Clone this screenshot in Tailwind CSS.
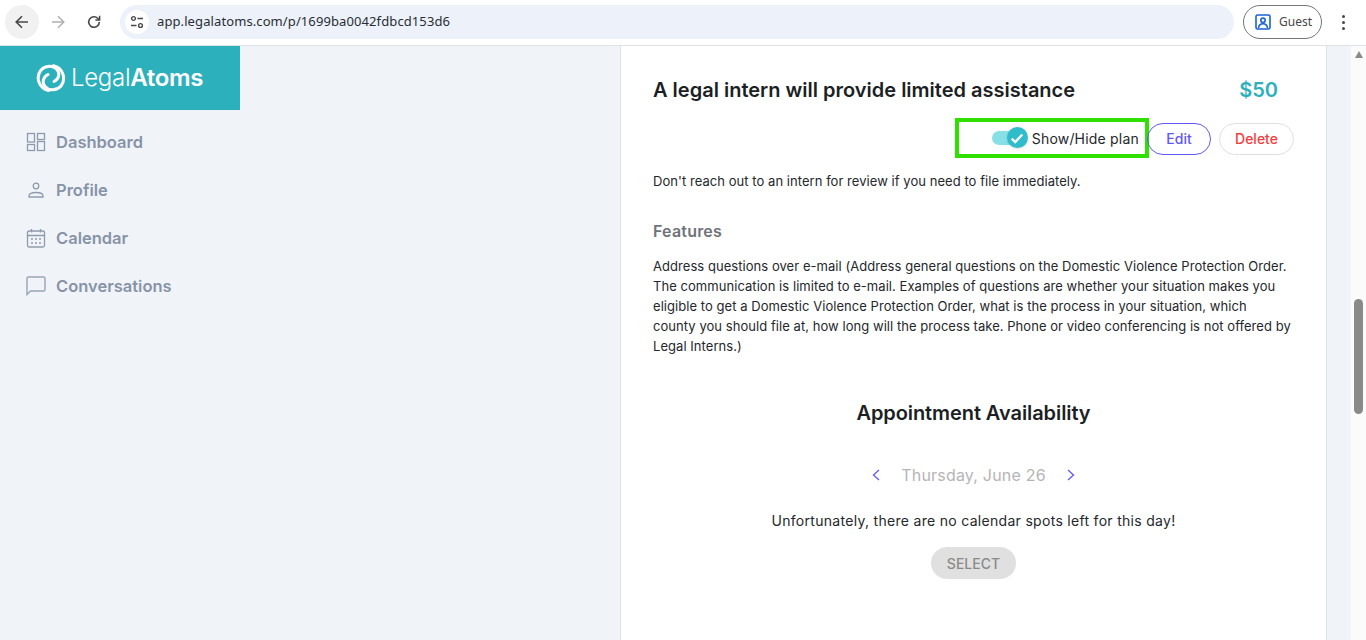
<!DOCTYPE html>
<html lang="en">
<head>
    <meta charset="UTF-8">
    <title>LegalAtoms</title>
    <script src="https://cdn.jsdelivr.net/npm/@tailwindcss/browser@4"></script>
</head>
<body class="h-[640px] w-[1366px] overflow-hidden bg-[#f0f4f9] font-['Inter',sans-serif]">
    <!-- browser toolbar -->
    <div class="flex h-[46px] items-center border-b border-[#dfe1e5] bg-white pb-px font-['Noto_Sans',sans-serif]">
        <div class="ml-[5px] flex h-[34px] w-[34px] items-center justify-center rounded-full bg-[#f1f1f1]">
            <svg width="16" height="16" viewBox="0 0 16 16" fill="none" stroke="#474747" stroke-width="1.6"><path d="M14 8H2.500M8 2.200 2.200 8 8 13.800"/></svg>
        </div>
        <div class="ml-[2px] flex h-[34px] w-[34px] items-center justify-center">
            <svg width="16" height="16" viewBox="0 0 16 16" fill="none" stroke="#b0b0b0" stroke-width="1.5"><path d="M2 8h11.500M8 2.200 13.800 8 8 13.800"/></svg>
        </div>
        <div class="ml-[2px] flex h-[34px] w-[34px] items-center justify-center">
            <svg width="16" height="16" viewBox="0 0 16 16" fill="none" stroke="#474747" stroke-width="1.6"><path d="M13.300 8a5.300 5.300 0 1 1-1.600-3.800L13.500 6"/><path d="M13.600 1.800V6H9.400" stroke-width="1.5"/></svg>
        </div>
        <div class="ml-[9px] flex h-[34px] w-[1114px] items-center rounded-full bg-[#ecf1fa]">
            <div class="ml-[5px] flex h-6 w-6 items-center justify-center rounded-full bg-white">
                <svg width="14" height="14" viewBox="0 0 14 14" fill="none" stroke="#474747" stroke-width="1.4"><circle cx="3.500" cy="3.500" r="1.900"/><path d="M7.500 3.500H13M1 10.500h5.500"/><circle cx="10.500" cy="10.500" r="1.900"/></svg>
            </div>
            <span class="ml-[8px] text-[13px] tracking-[0.1px] text-[#2a2e33]">app.legalatoms.com/p/1699ba0042fdbcd153d6</span>
        </div>
        <div class="ml-[9px] flex h-[34px] w-[79px] items-center rounded-full border border-[#747775]">
            <svg class="ml-[11px]" width="16" height="16" viewBox="0 0 16 16" fill="none" stroke="#1a62d6" stroke-width="1.6"><rect x="1" y="1" width="14" height="14" rx="1.500"/><circle cx="8" cy="6.300" r="2.200"/><path d="M3.500 14c.3-3 2-4.300 4.500-4.300s4.200 1.300 4.500 4.300"/></svg>
            <span class="ml-[8px] text-xs text-[#474747]">Guest</span>
        </div>
        <div class="ml-[20px] flex flex-col gap-[3px]">
            <div class="h-[3px] w-[3px] rounded-full bg-[#474747]"></div>
            <div class="h-[3px] w-[3px] rounded-full bg-[#474747]"></div>
            <div class="h-[3px] w-[3px] rounded-full bg-[#474747]"></div>
        </div>
    </div>

    <div class="flex h-[594px]">
        <!-- sidebar -->
        <aside class="w-[240px] shrink-0">
            <div class="flex h-[64px] items-center bg-[#2cb0bc] pl-[36px] text-white">
                <svg width="30" height="30" viewBox="0 0 30 30" fill="none" stroke="white" stroke-width="3" stroke-linecap="round"><path d="M12.500 27.500A12.800 12.800 0 0 1 5 7C9 2.500 17 1.500 21 6.500c3.500 4.500 1.500 10-3 12"/><path d="M17.500 2.800A12.800 12.800 0 0 1 25 23C21 27.500 13 28.500 9 23.500c-3.500-4.500-1.500-10 3-12"/></svg>
                <span class="ml-[5px] text-[24px] font-light tracking-[-0.3px]">Legal<span class="font-semibold">Atoms</span></span>
            </div>
            <nav class="mt-[8px] text-[#8793a6]">
                <a class="flex h-[48px] items-center pl-[26px] text-[16.5px] font-semibold">
                    <svg class="w-[20px]" width="20" height="20" viewBox="0 0 20 20" fill="none" stroke="#8f9bad" stroke-width="1.3"><rect x="1.500" y="1.500" width="7" height="8.500"/><rect x="11.500" y="1.500" width="7" height="6"/><rect x="1.500" y="12.500" width="7" height="6"/><rect x="11.500" y="9.500" width="7" height="9"/></svg>
                    <span class="ml-[10px]">Dashboard</span>
                </a>
                <a class="flex h-[48px] items-center pl-[26px] text-[16.5px] font-semibold">
                    <svg class="w-[20px]" width="20" height="20" viewBox="0 0 20 20" fill="none" stroke="#8f9bad" stroke-width="1.3"><circle cx="10" cy="6" r="2.800"/><path d="M3 17v-1c0-2.200 2.500-3.500 7-3.500s7 1.300 7 3.500v1z"/></svg>
                    <span class="ml-[10px]">Profile</span>
                </a>
                <a class="flex h-[48px] items-center pl-[26px] text-[16.5px] font-semibold">
                    <svg class="w-[20px]" width="20" height="20" viewBox="0 0 20 20" fill="none" stroke="#8f9bad" stroke-width="1.3"><rect x="1.500" y="3" width="17" height="16" rx="1.500"/><path d="M1.500 7.500h17M5.500 1v3.500M14.500 1v3.500"/><path d="M5 11h2M9 11h2M13 11h2M5 15h2M9 15h2M13 15h2" stroke-width="1.600"/></svg>
                    <span class="ml-[10px]">Calendar</span>
                </a>
                <a class="flex h-[48px] items-center pl-[26px] text-[16.5px] font-semibold">
                    <svg class="w-[20px]" width="20" height="20" viewBox="0 0 20 20" fill="none" stroke="#9aa4b4" stroke-width="1.400"><path d="M1 18.500V2.500A1.500 1.500 0 0 1 2.500 1h15A1.500 1.500 0 0 1 19 2.500v11a1.500 1.500 0 0 1-1.500 1.500H4.500z"/></svg>
                    <span class="ml-[10px]">Conversations</span>
                </a>
            </nav>
        </aside>

        <div class="w-[380px] shrink-0"></div>

        <!-- plan card -->
        <main class="h-full w-[707px] shrink-0 border-x border-[#dfe2e7] bg-white pl-[32px] pr-[32px]">
            <div class="flex h-[58px] items-end justify-between pr-[16px]">
                <h1 class="text-[20px] leading-[28px] font-semibold text-[#1c1f24]">A legal intern will provide limited assistance</h1>
                <span class="text-[20px] leading-[28px] font-semibold text-[#2cb0bc]">$50</span>
            </div>
            <div class="mt-[14px] flex items-center justify-end">
                <div class="flex h-[40px] w-[194px] items-center justify-end border-[4px] border-[#2fe000] pr-[6px]">
                    <div class="relative h-[14px] w-[36px]">
                        <div class="h-[14px] w-[30px] rounded-full bg-[#87e0e6]"></div>
                        <div class="absolute top-[-4px] right-0 flex h-[21px] w-[21px] items-center justify-center rounded-full bg-[#2fbccb] shadow">
                            <svg width="14" height="14" viewBox="0 0 12 12" fill="none" stroke="white" stroke-width="2"><path d="M1.500 6.500 4.500 9.500 10.500 3"/></svg>
                        </div>
                    </div>
                    <span class="ml-[4px] text-[14px] tracking-[0.2px] text-[#24272c]">Show/Hide plan</span>
                </div>
                <button class="mt-[1px] ml-[-2px] h-[32px] w-[64px] rounded-full border border-[#6058f6] text-[14px] font-medium text-[#6058f6]">Edit</button>
                <button class="mt-[1px] ml-[8px] h-[32px] w-[75px] rounded-full border border-[#e0e0e0] text-[14px] font-medium text-[#f53d3d]">Delete</button>
            </div>
            <p class="mt-[13px] text-[13px] leading-[20px] tracking-[0.05px] text-[#24272c]">Don't reach out to an intern for review if you need to file immediately.</p>
            <h2 class="mt-[28px] text-[16px] leading-[24px] font-semibold tracking-[0.2px] text-[#6f737a]">Features</h2>
            <p class="mt-[13px] w-[640px] text-[13px] leading-[20px] tracking-[0.05px] text-[#24272c]">Address questions over e-mail (Address general questions on the Domestic Violence Protection Order. The communication is limited to e-mail. Examples of questions are whether your situation makes you eligible to get a Domestic Violence Protection Order, what is the process in your situation, which county you should file at, how long will the process take. Phone or video conferencing is not offered by Legal Interns.)</p>
            <div class="flex flex-col items-center">
                <h2 class="mt-[43px] text-[20px] leading-[28px] font-semibold tracking-[-0.08px] text-[#1c1f24]">Appointment Availability</h2>
                <div class="mt-[34px] flex h-[28px] items-center">
                    <svg width="8" height="12" viewBox="0 0 8 12" fill="none" stroke="#6058f6" stroke-width="1.300"><path d="M7 1 1.500 6 7 11"/></svg>
                    <span class="mx-[21px] text-[16px] tracking-[0.2px] text-[#b5b5b5]">Thursday, June 26</span>
                    <svg width="8" height="12" viewBox="0 0 8 12" fill="none" stroke="#6058f6" stroke-width="1.300"><path d="M1 1 6.500 6 1 11"/></svg>
                </div>
                <p class="mt-[22px] text-[14px] leading-[20px] tracking-[0.3px] text-[#24272c]">Unfortunately, there are no calendar spots left for this day!</p>
                <button class="mt-[16px] h-[32px] w-[85px] rounded-full bg-[#e0e0e0] text-[14px] font-medium text-[#8a8a8a]">SELECT</button>
            </div>
        </main>

        <div class="w-[24px] shrink-0"></div>

        <!-- scrollbar -->
        <div class="relative w-[15px] shrink-0 bg-[#fbfbfb]">
            <div class="absolute top-0 left-[4px] mt-[5px] h-0 w-0 border-x-[4px] border-b-[7px] border-x-transparent border-b-[#8a8a8a]"></div>
            <div class="absolute top-[253px] left-[3px] h-[115px] w-[9px] rounded-full bg-[#8a8a8a]"></div>
        </div>
    </div>
</body>
</html>
